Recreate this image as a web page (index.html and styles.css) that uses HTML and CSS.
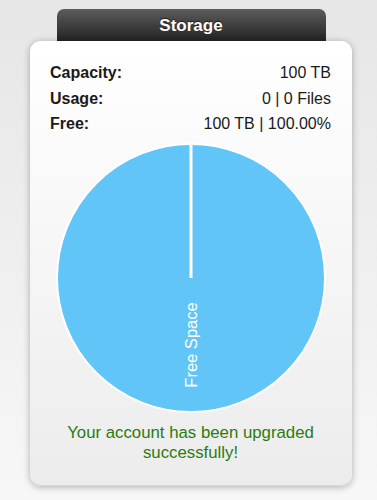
FILE: index.html
```html
<!DOCTYPE html>
<html lang="en">
<head>
  <meta charset="UTF-8">
  <title>Storage</title>
  <link rel="stylesheet" href="styles.css">
</head>
<body>

<div class="widget">
  <!-- Header tab -->
  <div class="tab">Storage</div>

  <!-- Card -->
  <div class="card">
    <div class="stats">
      <div class="stat-row"><span class="label">Capacity:</span><span class="value">100 TB</span></div>
      <div class="stat-row"><span class="label">Usage:</span><span class="value">0 | 0 Files</span></div>
      <div class="stat-row"><span class="label">Free:</span><span class="value">100 TB | 100.00%</span></div>
    </div>

    <div class="chart">
      <svg width="270" height="270" viewBox="0 0 270 270">
        <circle cx="135" cy="135" r="134" fill="#62c5f8" stroke="#fff" stroke-width="2"/>
        <line x1="135" y1="1" x2="135" y2="135" stroke="#fff" stroke-width="3"/>
        <text class="slice-label" x="0" y="0" transform="translate(135 202) rotate(-90)" text-anchor="middle" dominant-baseline="central">Free Space</text>
      </svg>
    </div>

    <p class="message">Your account has been upgraded successfully!</p>
  </div>
</div>

</body>
</html>
```

FILE: styles.css
```css
* { box-sizing: border-box; }

body {
  font-family: "Liberation Sans", Arial, sans-serif;
  margin: 0;
  min-height: 500px;
  background: linear-gradient(#e6e6e6, #f7f7f7);
}

.widget {
  width: 322px;
  margin-left: 30px;
  padding-top: 9px;
}

.tab {
  width: 269px;
  height: 32px;
  margin: 0 auto;
  padding-top: 7px;
  text-align: center;
  font-size: 17px;
  font-weight: bold;
  color: white;
  text-shadow: 0 -1px 1px rgba(0,0,0,0.6);
  background: linear-gradient(#5c5c5c, #232323);
  border-radius: 7px 7px 0 0;
}

.card {
  background: linear-gradient(#ffffff, #ececec);
  border-radius: 11px;
  border-bottom: 1px solid #d8d8d8;
  box-shadow: 0 1px 7px rgba(0,0,0,0.3);
  padding: 19px 21px 21px 20px;
}

.stat-row {
  display: flex;
  justify-content: space-between;
  font-size: 16px;
  line-height: 25.6px;
  color: #1a1a1a;
}

.label {
  font-weight: bold;
}

.chart {
  display: flex;
  justify-content: center;
  margin-top: 6px;
}

.chart svg {
  display: block;
}

.slice-label {
  font-family: "Liberation Sans", Arial, sans-serif;
  font-size: 16.5px;
  fill: white;
}

.message {
  margin: 10px 0 0;
  text-align: center;
  font-size: 16.8px;
  line-height: 20.5px;
  color: #2b7c10;
}
```
